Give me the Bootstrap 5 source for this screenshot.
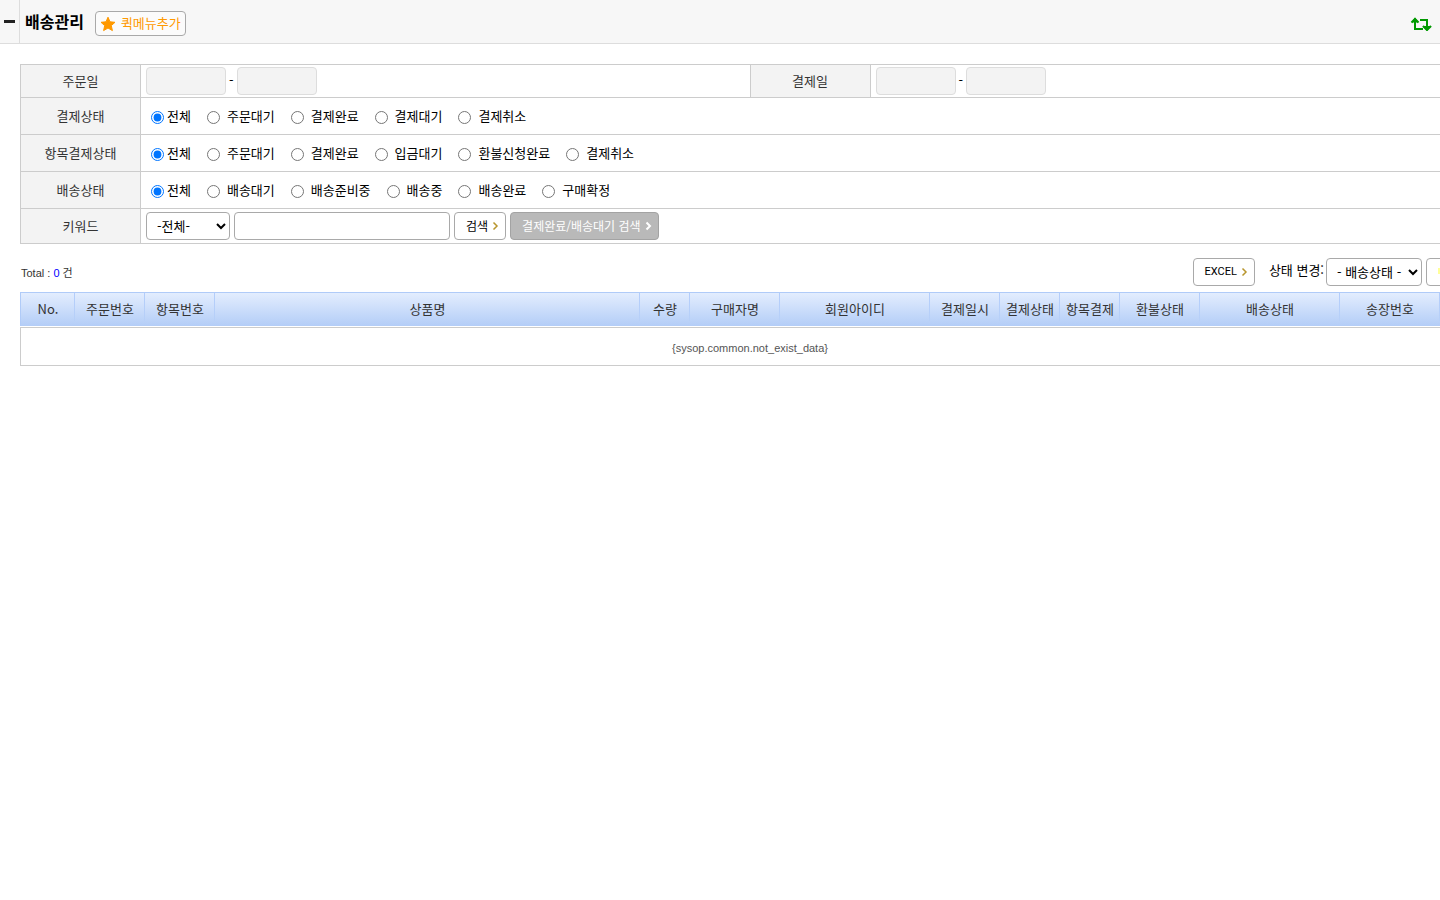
<!DOCTYPE html>
<html lang="ko">
<head>
<meta charset="utf-8">
<meta name="viewport" content="width=device-width, initial-scale=1">
<title>배송관리</title>
<link href="https://cdn.jsdelivr.net/npm/bootstrap@5.3.0/dist/css/bootstrap.min.css" rel="stylesheet">
<style>
body{font-family:"Noto Sans CJK KR",sans-serif;font-size:13px;line-height:20px;color:#000;overflow-x:hidden}
.topbar{height:44px;background:#f7f7f7;border-bottom:1px solid #ddd}
.fold{width:20px;border:0;border-right:1px solid #ddd;background:none}
.heading{padding:4px 4px 0 5px}
.page-title{font-size:16px;line-height:24px;font-weight:700;margin:0 7px 6px 0}
.tool{height:28px;border:1px solid #a9a9a9;border-radius:4px;background:#fff;color:#000;font-size:12px;line-height:20px;padding:0 6px 0 11px;white-space:nowrap}
.tool.quick{height:25px;color:#f90;font-size:13px;background:#fbfbfb;padding:0 4px}
.quick svg{margin-right:5px}
.quick span{margin-bottom:2px}
.tool.muted-tool{background:#b9b9b9;border-color:#a3a3a3;color:#fff}
.wide{min-width:1480px;padding:20px 0 0 20px}
.filters,.orders{width:100%;table-layout:fixed}
.filters{border-collapse:collapse}
.filters tr{height:37px}
.filters tr.first-line{height:33px}
.filters tr.last-line{height:35px}
.filters th,.filters td{border:1px solid #ccc;padding:0 5px}
.filters th{background:#f3f3f3;color:#333;font-weight:400;text-align:center}
.field{height:28px;border:1px solid #a9a9a9;border-radius:4px;background-color:#fff;color:#000;font-size:13px;padding:0 6px 2px}
.date-box{width:80px;border-color:#ddd;background:#f3f3f3}
.dates{gap:3px}
.dates span{line-height:26px}
.keyword{width:216px}
.scope{width:84px}
.ship{width:96px;padding-right:0}
.opts{padding:0 5px;gap:16px}
.opts label{display:flex;align-items:center;gap:7px}
.opts label:first-child{gap:3px}
.opts input{width:13px;height:13px;margin:2px 0 0}
.latin{font-family:"Liberation Sans","Noto Sans CJK KR",sans-serif;font-size:11px}
.excel{font-family:Roboto,"Liberation Sans",sans-serif;font-size:11px}
.actions{padding:14px 0 6px}
.total{color:#333;padding:2px 0 0 1px}
.total b{font-weight:400;color:#00f}
.state-label{line-height:24px;margin:0 2px 4px 14px}
.change{width:54px}
.orders{border-collapse:separate;border-spacing:0}
.orders th{height:34px;padding:0 0 2px;font-weight:400;color:#333;text-align:center;border-top:1px solid #b0cbf8;background:linear-gradient(#b3cdfb,#b7d0f8) right top/1px 28px no-repeat,linear-gradient(#e3edfe,#b3cdf7)}
.orders th:first-child{border-left:1px solid #b0cbf8}
.orders td{height:39px;padding:2px 0 0;border:1px solid #ccc;text-align:center;color:#555}
.orders .spacer td{height:1px;padding:0;border:0}
</style>
</head>
<body>
<header class="topbar d-flex align-items-stretch">
  <button class="fold p-0 d-flex align-items-center justify-content-center" type="button" aria-label="메뉴 접기"><svg width="12" height="4" viewBox="0 0 12 4"><path d="M0 0h11v3H0z" fill="#222"/></svg></button>
  <div class="heading d-flex align-items-center flex-grow-1">
    <h1 class="page-title">배송관리</h1>
    <button class="tool quick d-flex align-items-center ms-1" type="button"><svg width="16" height="16" viewBox="0 0 16 16"><path d="M8 1.2l2 4.6 5 .5-3.700 3.300 1.100 5L8 12l-4.400 2.600 1.100-5L1 6.300l5-.5z" fill="#f90" stroke="#f90" stroke-linejoin="round"/></svg><span>퀵메뉴추가</span></button>
    <a class="ms-auto me-1 d-flex" href="#" aria-label="새로고침"><svg width="22" height="14" viewBox="0 0 22 14" fill="none" stroke="#090" stroke-width="2"><path d="M5 3v9h8M10 3h7v9"/><path d="M5 .5L1.500 5.500h7zM17 14l-4.500-5h9z" fill="#090" stroke="none"/><path d="M1.500 5.500L5 2l3.500 3.500M13 9l4 4 4-4"/></svg></a>
  </div>
</header>
<main class="wide">
  <form>
    <table class="filters">
      <colgroup><col style="width:120px"><col><col style="width:120px"><col></colgroup>
      <tr class="first-line"><th scope="row">주문일</th><td><div class="dates d-flex"><input class="field date-box" aria-label="주문일 시작" readonly><span>-</span><input class="field date-box" aria-label="주문일 끝" readonly></div></td><th scope="row">결제일</th><td><div class="dates d-flex"><input class="field date-box" aria-label="결제일 시작" readonly><span>-</span><input class="field date-box" aria-label="결제일 끝" readonly></div></td></tr>
      <tr><th scope="row">결제상태</th><td colspan="3"><div class="opts d-flex"><label><input type="radio" name="pay" checked>전체</label><label><input type="radio" name="pay">주문대기</label><label><input type="radio" name="pay">결제완료</label><label><input type="radio" name="pay">결제대기</label><label><input type="radio" name="pay">결제취소</label></div></td></tr>
      <tr><th scope="row">항목결제상태</th><td colspan="3"><div class="opts d-flex"><label><input type="radio" name="item" checked>전체</label><label><input type="radio" name="item">주문대기</label><label><input type="radio" name="item">결제완료</label><label><input type="radio" name="item">입금대기</label><label><input type="radio" name="item">환불신청완료</label><label><input type="radio" name="item">결제취소</label></div></td></tr>
      <tr><th scope="row">배송상태</th><td colspan="3"><div class="opts d-flex"><label><input type="radio" name="ship" checked>전체</label><label><input type="radio" name="ship">배송대기</label><label><input type="radio" name="ship">배송준비중</label><label><input type="radio" name="ship">배송중</label><label><input type="radio" name="ship">배송완료</label><label><input type="radio" name="ship">구매확정</label></div></td></tr>
      <tr class="last-line"><th scope="row"><label for="kw">키워드</label></th><td colspan="3"><div class="d-flex gap-1"><select class="field scope" aria-label="검색 범위"><option>-전체-</option></select><input class="field keyword" id="kw" type="text"><button class="tool d-flex align-items-center" type="button">검색<svg class="ms-1" width="7" height="10" viewBox="0 0 7 10"><path d="M1.500 1.500L5 5 1.500 8.500" fill="none" stroke="#b8962e" stroke-width="1.500"/></svg></button><button class="tool muted-tool d-flex align-items-center" type="button">결제완료/배송대기 검색<svg class="ms-1" width="7" height="10" viewBox="0 0 7 10"><path d="M1.500 1.500L5 5 1.500 8.500" fill="none" stroke="#fff" stroke-width="2"/></svg></button></div></td></tr>
    </table>
  </form>
  <div class="d-flex align-items-center actions">
    <div class="total latin">Total : <b>0</b> 건</div>
    <button class="tool excel d-flex align-items-center ms-auto" type="button">EXCEL<svg class="ms-1" width="7" height="10" viewBox="0 0 7 10"><path d="M1.500 1.500L5 5 1.500 8.500" fill="none" stroke="#b8962e" stroke-width="1.500"/></svg></button>
    <label class="state-label" for="st">상태 변경:</label>
    <select class="field ship" id="st"><option>- 배송상태 -</option></select>
    <button class="tool change ms-1 d-flex align-items-center" type="button" aria-label="변경"><svg width="10" height="10" viewBox="0 0 10 10"><path d="M1 1v6M1 4h5" fill="none" stroke="#ff9" stroke-width="2"/></svg></button>
  </div>
  <table class="orders">
    <colgroup><col style="width:55px"><col style="width:70px"><col style="width:70px"><col><col style="width:50px"><col style="width:90px"><col style="width:150px"><col style="width:70px"><col style="width:60px"><col style="width:60px"><col style="width:80px"><col style="width:140px"><col style="width:100px"><col style="width:40px"></colgroup>
    <thead><tr><th>No.</th><th>주문번호</th><th>항목번호</th><th>상품명</th><th>수량</th><th>구매자명</th><th>회원아이디</th><th>결제일시</th><th>결제상태</th><th>항목결제</th><th>환불상태</th><th>배송상태</th><th>송장번호</th><th></th></tr></thead>
    <tbody><tr class="spacer"><td colspan="14"></td></tr><tr><td colspan="14"><span class="latin">{sysop.common.not_exist_data}</span></td></tr></tbody>
  </table>
</main>
<script src="https://cdn.jsdelivr.net/npm/bootstrap@5.3.0/dist/js/bootstrap.bundle.min.js"></script>
</body>
</html>
